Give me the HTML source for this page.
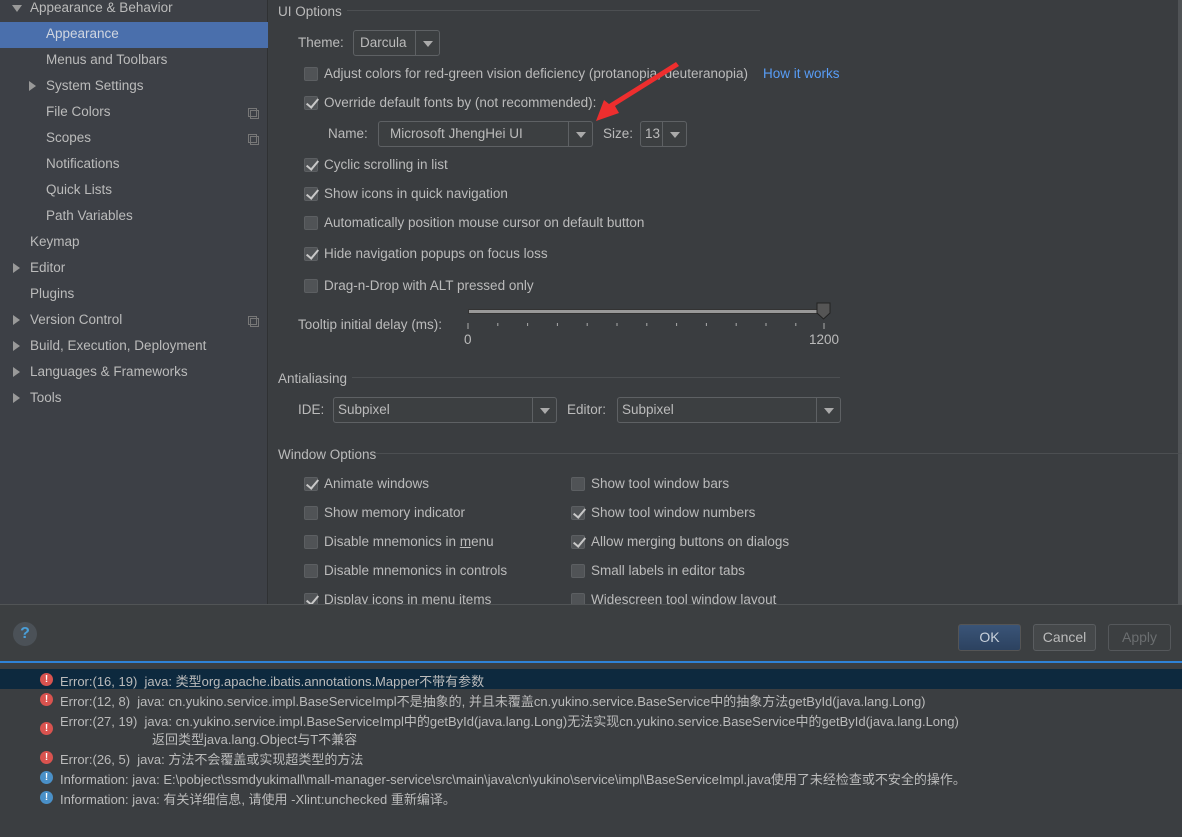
<!DOCTYPE html>
<html><head><meta charset="utf-8"><style>
*{margin:0;padding:0;box-sizing:border-box}
body{width:1182px;height:837px;overflow:hidden;background:#3b3e41;font-family:"Liberation Sans","Noto Sans CJK SC",sans-serif;font-size:13.5px;color:#bbbbbb;position:relative}
.a{position:absolute;white-space:nowrap}
#side{position:absolute;left:0;top:0;width:268px;height:604px;background:#3d4046;border-right:1px solid #2f3133}
#main{position:absolute;left:269px;top:0;width:913px;height:604px;background:#3a3d40}
.si{position:absolute;height:26px;line-height:26px;font-size:13.5px;color:#bbbbbb}
.tri{position:absolute;width:0;height:0;border-top:5px solid transparent;border-bottom:5px solid transparent;border-left:7px solid #999}
.trd{position:absolute;width:0;height:0;border-left:5px solid transparent;border-right:5px solid transparent;border-top:7px solid #999}
.cp{position:absolute;width:9px;height:9px;border:1px solid #777}
.cp:after{content:"";position:absolute;left:1px;top:1px;width:7px;height:7px;border:1px solid #777}
.cb{position:absolute;width:14px;height:14px;background:#505356;border:1px solid #5c5f62;border-radius:2px}
.ck:after{content:"";position:absolute;left:4px;top:-1px;width:5px;height:10px;border-right:2px solid #c8c8c8;border-bottom:2px solid #c8c8c8;transform:rotate(40deg)}
.combo{position:absolute;border:1px solid #5e6164;border-radius:3px;height:26px;line-height:24px;padding-left:6px;color:#bbbbbb;background:#3c3f41}
.combo .btn{position:absolute;right:0;top:0;width:24px;height:24px;border-left:1px solid #5e6164}
.combo .btn:after{content:"";position:absolute;left:7px;top:10px;border-left:5px solid transparent;border-right:5px solid transparent;border-top:6px solid #aaa}
.sep{position:absolute;height:1px;background:#4c4f52}
.lg{position:absolute;left:60px;font-size:13px;color:#bbbbbb;white-space:nowrap}
.ic{position:absolute;left:40px;width:13px;height:13px;border-radius:50%;color:#fff;font-size:10px;font-weight:bold;line-height:13px;text-align:center}
.er{background:#d9534f}.in{background:#4a90c8}
</style></head><body>
<div id="side">
<div class="trd" style="left:12px;top:5px"></div>
<div class="si" style="left:30px;top:-5px">Appearance &amp; Behavior</div>
<div style="position:absolute;left:0;top:22px;width:268px;height:26px;background:#4a6fac"></div>
<div class="si" style="left:46px;top:21px;color:#d0d6e0">Appearance</div>
<div class="si" style="left:46px;top:47px">Menus and Toolbars</div>
<div class="tri" style="left:29px;top:81px"></div>
<div class="si" style="left:46px;top:73px">System Settings</div>
<div class="si" style="left:46px;top:99px">File Colors</div><div class="cp" style="left:248px;top:108px"></div>
<div class="si" style="left:46px;top:125px">Scopes</div><div class="cp" style="left:248px;top:134px"></div>
<div class="si" style="left:46px;top:151px">Notifications</div>
<div class="si" style="left:46px;top:177px">Quick Lists</div>
<div class="si" style="left:46px;top:203px">Path Variables</div>
<div class="si" style="left:30px;top:229px">Keymap</div>
<div class="tri" style="left:13px;top:263px"></div><div class="si" style="left:30px;top:255px">Editor</div>
<div class="si" style="left:30px;top:281px">Plugins</div>
<div class="tri" style="left:13px;top:315px"></div><div class="si" style="left:30px;top:307px">Version Control</div><div class="cp" style="left:248px;top:316px"></div>
<div class="tri" style="left:13px;top:341px"></div><div class="si" style="left:30px;top:333px">Build, Execution, Deployment</div>
<div class="tri" style="left:13px;top:367px"></div><div class="si" style="left:30px;top:359px">Languages &amp; Frameworks</div>
<div class="tri" style="left:13px;top:393px"></div><div class="si" style="left:30px;top:385px">Tools</div>
</div>
<div id="main"></div>
<div style="position:absolute;left:1178px;top:0;width:4px;height:604px;background:#505356"></div>

<div class="a" style="left:278px;top:4px">UI Options</div><div class="sep" style="left:347px;top:10px;width:413px"></div>
<div class="a" style="left:298px;top:35px">Theme:</div>
<div class="combo" style="left:353px;top:30px;width:87px">Darcula<div class="btn"></div></div>
<div class="cb" style="left:304px;top:67px"></div><div class="a" style="left:324px;top:66px">Adjust colors for red-green vision deficiency (protanopia, deuteranopia)</div>
<div class="a" style="left:763px;top:66px;color:#589df6">How it works</div>
<div class="cb ck" style="left:304px;top:96px"></div><div class="a" style="left:324px;top:95px">Override default fonts by (not recommended):</div>
<div class="a" style="left:328px;top:126px">Name:</div>
<div class="combo" style="left:378px;top:121px;width:215px;padding-left:11px">Microsoft JhengHei UI<div class="btn"></div></div>
<div class="a" style="left:603px;top:126px">Size:</div>
<div class="combo" style="left:640px;top:121px;width:47px;padding-left:4px">13<div class="btn"></div></div>
<div class="cb ck" style="left:304px;top:158px"></div><div class="a" style="left:324px;top:157px">Cyclic scrolling in list</div>
<div class="cb ck" style="left:304px;top:187px"></div><div class="a" style="left:324px;top:186px">Show icons in quick navigation</div>
<div class="cb" style="left:304px;top:216px"></div><div class="a" style="left:324px;top:215px">Automatically position mouse cursor on default button</div>
<div class="cb ck" style="left:304px;top:247px"></div><div class="a" style="left:324px;top:246px">Hide navigation popups on focus loss</div>
<div class="cb" style="left:304px;top:279px"></div><div class="a" style="left:324px;top:278px">Drag-n-Drop with ALT pressed only</div>
<div class="a" style="left:298px;top:317px">Tooltip initial delay (ms):</div>
<div style="position:absolute;left:468px;top:309px;width:358px;height:5px;background:#999;border:1px solid #333"></div>
<svg class="a" style="left:816px;top:302px" width="16" height="18"><path d="M1 1H14V11L7.5 17L1 11Z" fill="#555" stroke="#222"/></svg>
<svg class="a" style="left:466px;top:320px" width="364" height="10"><g stroke="#aaa"><path d="M2 3V9M31.8 3V6M61.6 3V6M91.4 3V6M121.2 3V6M151 3V6M180.8 3V6M210.6 3V6M240.4 3V6M270.2 3V6M300 3V6M329.8 3V6M358 3V9"/></g></svg>
<div class="a" style="left:464px;top:332px">0</div><div class="a" style="left:809px;top:332px">1200</div>
<div class="a" style="left:278px;top:371px">Antialiasing</div><div class="sep" style="left:352px;top:377px;width:488px"></div>
<div class="a" style="left:298px;top:402px">IDE:</div>
<div class="combo" style="left:333px;top:397px;width:224px;padding-left:4px">Subpixel<div class="btn"></div></div>
<div class="a" style="left:567px;top:402px">Editor:</div>
<div class="combo" style="left:617px;top:397px;width:224px;padding-left:4px">Subpixel<div class="btn"></div></div>
<div class="a" style="left:278px;top:447px">Window Options</div><div class="sep" style="left:376px;top:453px;width:806px"></div>
<div class="cb ck" style="left:304px;top:477px"></div><div class="a" style="left:324px;top:476px">Animate windows</div>
<div class="cb" style="left:304px;top:506px"></div><div class="a" style="left:324px;top:505px">Show memory indicator</div>
<div class="cb" style="left:304px;top:535px"></div><div class="a" style="left:324px;top:534px">Disable mnemonics in <u>m</u>enu</div>
<div class="cb" style="left:304px;top:564px"></div><div class="a" style="left:324px;top:563px">Disable mnemonics in controls</div>
<div class="cb ck" style="left:304px;top:593px"></div><div class="a" style="left:324px;top:592px">Display icons in menu items</div>
<div class="cb" style="left:571px;top:477px"></div><div class="a" style="left:591px;top:476px">Show tool window bars</div>
<div class="cb ck" style="left:571px;top:506px"></div><div class="a" style="left:591px;top:505px">Show tool window numbers</div>
<div class="cb ck" style="left:571px;top:535px"></div><div class="a" style="left:591px;top:534px">Allow merging buttons on dialogs</div>
<div class="cb" style="left:571px;top:564px"></div><div class="a" style="left:591px;top:563px">Small labels in editor tabs</div>
<div class="cb" style="left:571px;top:593px"></div><div class="a" style="left:591px;top:592px">Widescreen tool window layout</div>
<svg class="a" style="left:590px;top:60px" width="95" height="70"><path d="M89 6 L25 46 L29 53 L6 61 L14 40 L19 44 L86 2 Z" fill="#ee2e2e"/></svg>

<div style="position:absolute;left:0;top:604px;width:1182px;height:57px;background:#3c3f41;border-top:1px solid #515456"></div>
<div style="position:absolute;left:13px;top:622px;width:24px;height:24px;border-radius:50%;background:#4b5157;color:#4a9fd8;font-weight:bold;font-size:16px;text-align:center;line-height:24px">?</div>
<div style="position:absolute;left:958px;top:624px;width:63px;height:27px;border:1px solid #555;border-radius:3px;background:linear-gradient(#3a5477,#2c4260);color:#c8d0da;text-align:center;line-height:25px;font-size:14px">OK</div>
<div style="position:absolute;left:1033px;top:624px;width:63px;height:27px;border:1px solid #5a5d60;border-radius:3px;background:#45484a;text-align:center;line-height:25px;font-size:14px">Cancel</div>
<div style="position:absolute;left:1108px;top:624px;width:63px;height:27px;border:1px solid #55585b;border-radius:3px;text-align:center;line-height:25px;font-size:14px;color:#6b6e70">Apply</div>
<div style="position:absolute;left:0;top:661px;width:1182px;height:2px;background:#2f82d6"></div>
<div style="position:absolute;left:0;top:663px;width:1182px;height:174px;background:#3b3e41"></div>
<div style="position:absolute;left:0;top:669px;width:1182px;height:20px;background:#0d293e"></div>
<div class="ic er" style="top:673px">!</div><div class="lg" style="top:671px">Error:(16, 19)&nbsp; java: 类型org.apache.ibatis.annotations.Mapper不带有参数</div>
<div class="ic er" style="top:693px">!</div><div class="lg" style="top:691px">Error:(12, 8)&nbsp; java: cn.yukino.service.impl.BaseServiceImpl不是抽象的, 并且未覆盖cn.yukino.service.BaseService中的抽象方法getById(java.lang.Long)</div>
<div class="ic er" style="top:722px">!</div><div class="lg" style="top:711px">Error:(27, 19)&nbsp; java: cn.yukino.service.impl.BaseServiceImpl中的getById(java.lang.Long)无法实现cn.yukino.service.BaseService中的getById(java.lang.Long)</div>
<div class="lg" style="left:152px;top:729px">返回类型java.lang.Object与T不兼容</div>
<div class="ic er" style="top:751px">!</div><div class="lg" style="top:749px">Error:(26, 5)&nbsp; java: 方法不会覆盖或实现超类型的方法</div>
<div class="ic in" style="top:771px">!</div><div class="lg" style="top:769px">Information: java: E:\pobject\ssmdyukimall\mall-manager-service\src\main\java\cn\yukino\service\impl\BaseServiceImpl.java使用了未经检查或不安全的操作。</div>
<div class="ic in" style="top:791px">!</div><div class="lg" style="top:789px">Information: java: 有关详细信息, 请使用 -Xlint:unchecked 重新编译。</div>
</body></html>
